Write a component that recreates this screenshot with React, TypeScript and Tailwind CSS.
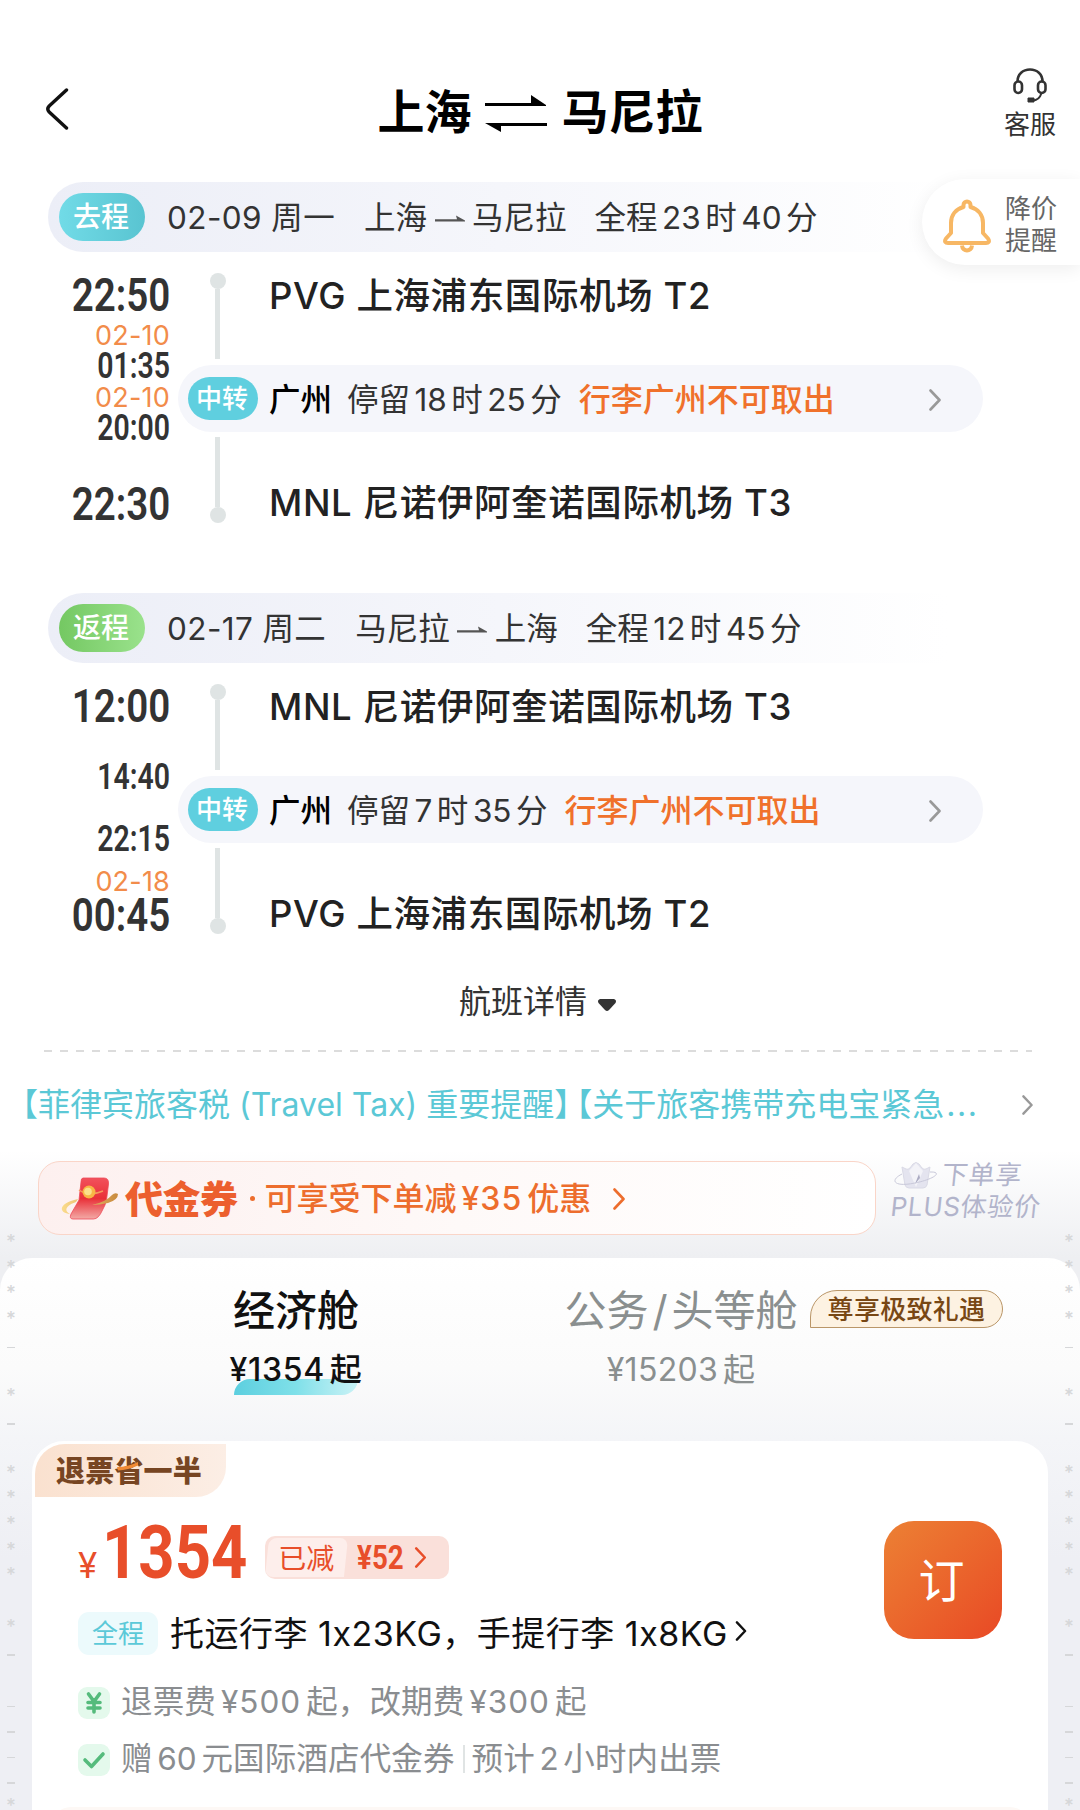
import { Fragment } from "react";
import type { ReactNode } from "react";

interface TimeItem { text: string; kind: "big" | "small" | "date"; gap: string }

interface Leg {
  tag: string; tagClass: string; date: string; from: string; to: string; total: string;
  fromAirport: string; toAirport: string; stay: string; times: TimeItem[];
}

const LEGS: Leg[] = [
  {
    tag: "去程", tagClass: "from-[#71dbe7] to-[#59c4d1]",
    date: "02-09 周一", from: "上海", to: "马尼拉", total: "全程23时40分",
    fromAirport: "PVG 上海浦东国际机场 T2", toAirport: "MNL 尼诺伊阿奎诺国际机场 T3",
    stay: "停留18时25分",
    times: [
      { text: "22:50", kind: "big",   gap: "mt-[25px]" },
      { text: "02-10", kind: "date",  gap: "mt-[14px]" },
      { text: "01:35", kind: "small", gap: "mt-[7px]" },
      { text: "02-10", kind: "date",  gap: "mt-[9px]" },
      { text: "20:00", kind: "small", gap: "mt-[7px]" },
      { text: "22:30", kind: "big",   gap: "mt-[46px]" },
    ],
  },
  {
    tag: "返程", tagClass: "from-[#74c862] to-[#9ae28c]",
    date: "02-17 周二", from: "马尼拉", to: "上海", total: "全程12时45分",
    fromAirport: "MNL 尼诺伊阿奎诺国际机场 T3", toAirport: "PVG 上海浦东国际机场 T2",
    stay: "停留7时35分",
    times: [
      { text: "12:00", kind: "big",   gap: "mt-[25px]" },
      { text: "14:40", kind: "small", gap: "mt-[41px]" },
      { text: "22:15", kind: "small", gap: "mt-[36px]" },
      { text: "02-18", kind: "date",  gap: "mt-[20px]" },
      { text: "00:45", kind: "big",   gap: "mt-[6px]" },
    ],
  },
];

const WATERMARK = "****- *- ***** *- ----*".split("");

// Adds a little air between Chinese characters and the numbers beside them
function Mixed({ text }: { text: string }) {
  return (
    <>
      {text.split(/(¥?\d+)/).map((part, i) =>
        i % 2 ? (
          <span key={i} className={part.startsWith("¥") ? "mx-[5px] tracking-[1px]" : "mx-[4.5px]"}>{part}</span>
        ) : (
          <Fragment key={i}>{part}</Fragment>
        )
      )}
    </>
  );
}

function Chevron({ className }: { className: string }) {
  return (
    <svg viewBox="0 0 12 22" fill="none" stroke="currentColor" strokeWidth="2.6" strokeLinecap="round" strokeLinejoin="round" className={className}>
      <path d="M1.5 1.5 10.5 11 1.5 20.5" />
    </svg>
  );
}

function Time({ text, kind, gap }: TimeItem) {
  if (kind === "date") {
    return <div className={`flex h-5 items-center text-[27px] leading-none tracking-[0.2px] text-[#f28c4a] ${gap}`}>{text}</div>;
  }
  return (
    <div
      className={`flex origin-right items-center font-[Roboto] leading-none text-[#333] ${gap} ${
        kind === "big" ? "h-[34px] scale-x-[0.82] text-[47px] font-semibold" : "h-[27px] scale-x-[0.79] pt-px text-[36px] font-semibold -mb-px"
      }`}
    >
      {text}
    </div>
  );
}

function LegBlock({ leg }: { leg: Leg }) {
  return (
    <section>
      <div className="ml-12 flex h-[70px] w-[900px] items-center rounded-l-full bg-gradient-to-r from-[#eceef7] via-[#f5f6fb] to-white pl-[11px] text-[31.5px] leading-none text-[#333]">
        <span className={`mr-[22px] flex h-12 w-[86px] items-center justify-center rounded-full bg-gradient-to-r pr-0.5 text-[28px] font-medium text-white ${leg.tagClass}`}>
          {leg.tag}
        </span>
        <span className="mt-px tracking-[0.4px]">{leg.date}</span>
        <span className="ml-[29px] mt-px">{leg.from}</span>
        <svg viewBox="0 0 30 8" className="mx-[7.5px] mt-1 h-2 w-[30px] shrink-0">
          <path d="M0 4.2h22L21 .6 30 5.6v.8H0z" fill="#555" />
        </svg>
        <span className="mt-px">{leg.to}</span>
        <span className="ml-[28px] mt-px"><Mixed text={leg.total} /></span>
      </div>

      <div className="flex">
        <div className="flex w-[178px] flex-col items-end pr-2">
          {leg.times.map((t, i) => <Time key={i} {...t} />)}
        </div>

        <div className="flex-1">
          <div className="flex h-[113px]">
            <div className="ml-[31.5px] flex w-4 flex-col items-center pt-[21px]">
              <div className="h-4 w-4 rounded-full bg-[#dfe4e4]" />
              <div className="h-[70px] w-[5px] bg-[#dfe4e4]" />
            </div>
            <div className="ml-[43.5px] flex h-[88px] items-center text-[36.5px] font-medium leading-none tracking-[0.6px] text-[#222]">{leg.fromAirport}</div>
          </div>

          <div className="flex h-[67px] w-[805px] items-center rounded-full bg-[#f5f6fb] pl-2.5 pr-[42px] text-[31.5px] leading-none">
            <span className="mr-[11px] flex h-[43px] w-[70px] items-center justify-center rounded-full bg-[#5fcfdf] pr-0.5 text-[26px] font-medium text-white">中转</span>
            <span className="mt-0.5 font-medium text-black">广州</span>
            <span className="ml-[15px] mt-0.5 text-[#333]"><Mixed text={leg.stay} /></span>
            <span className="ml-[17px] mt-0.5 text-[32px] font-medium text-[#f0712b]">行李广州不可取出</span>
            <Chevron className="ml-auto mt-0.5 h-[22px] w-3 text-[#999]" />
          </div>

          <div className="flex h-[91px]">
            <div className="ml-[31.5px] flex w-4 flex-col items-center pt-[5px]">
              <div className="h-[70px] w-[5px] bg-[#dfe4e4]" />
              <div className="h-4 w-4 rounded-full bg-[#dfe4e4]" />
            </div>
            <div className="ml-[43.5px] mt-[27px] flex h-[88px] items-center self-start text-[36.5px] font-medium leading-none tracking-[0.6px] text-[#222]">{leg.toAirport}</div>
          </div>
        </div>
      </div>
    </section>
  );
}

function Header() {
  return (
    <header className="flex h-[182px] items-start justify-between pl-[46px] pr-6">
      <svg viewBox="0 0 24 42" fill="none" stroke="#111" strokeWidth="3.4" strokeLinecap="round" strokeLinejoin="round" className="mt-[88px] h-[42px] w-6">
        <path d="M20.5 2 3.2 18q-2.8 3 0 6L20.5 40" />
      </svg>
      <h1 className="ml-[6px] mt-[88px] flex items-center text-[47px] font-bold leading-none text-black">
        上海
        <svg viewBox="0 0 62 38" className="mx-[14px] mt-0.5 h-[38px] w-[62px]">
          <path d="M0 9H46V1L61 11V12H0zM62 29V32H16V38L0 29z" />
        </svg>
        马尼拉
      </h1>
      <div className="mt-[67px] flex flex-col items-center text-[26px] leading-none text-[#333]">
        <svg viewBox="0 0 36 38" fill="none" stroke="#333" strokeWidth="2.6" className="h-[38px] w-9">
          <path d="M5.500 14.500C5.500 7 11 2.500 18 2.500S30.500 7 30.500 14.500" />
          <rect x="2.500" y="14.500" width="7.500" height="11.500" rx="3.700" />
          <rect x="26" y="14.500" width="7.500" height="11.500" rx="3.700" />
          <path d="M29.500 26c-1.500 5-4.500 7.500-9 7.500" strokeWidth="2" />
          <path d="M16 31h6v4h-6z" fill="#333" strokeWidth="1" />
        </svg>
        <span className="mt-[7px]">客服</span>
      </div>
    </header>
  );
}

function PriceAlert() {
  return (
    <div className="absolute right-0 top-[179px] flex h-[86px] w-[158px] items-center rounded-l-full bg-white pl-[21px] text-[#666] shadow-[0_4px_18px_rgba(0,0,0,0.07)]">
      <svg viewBox="0 0 48 54" fill="none" stroke="#f7b764" strokeWidth="4" strokeLinejoin="round" className="mt-[7px] h-[54px] w-12">
        <path d="M20.500 8V6a3.500 3.500 0 0 1 7 0v2C35 10 40 16 40 24v10l5 5.500c2 3 .5 4.500-2 4.500H5c-2.500 0-4-1.500-2-4.500L8 34V24C8 16 13 10 20.500 8z" />
        <path d="M19 46.500c.5 6.500 9.500 6.500 10 0" />
      </svg>
      <div className="ml-[14px] mt-[6px] text-[26px] leading-8">
        <div>降价</div>
        <div>提醒</div>
      </div>
    </div>
  );
}

function CouponBar() {
  return (
    <div className="mt-6 flex h-[74px] items-start pl-[38px]">
      <div className="flex h-[74px] w-[838px] items-center rounded-[22px] border-[1.5px] border-[#fad5c8] bg-gradient-to-r from-[#fdf0ef] via-[#fef9f8] to-white pl-[22px] pt-px leading-none">
        <svg viewBox="0 0 58 44" className="h-11 w-[58px]">
          <defs>
            <linearGradient id="packet" x1="0" y1="0" x2="0" y2="1">
              <stop offset="0" stopColor="#f2515c" />
              <stop offset=".5" stopColor="#e93038" />
              <stop offset="1" stopColor="#f3aaa6" />
            </linearGradient>
            <linearGradient id="ribbon" x1="0" y1="0" x2="1" y2="0">
              <stop offset="0" stopColor="#fbdc8c" />
              <stop offset="1" stopColor="#c98a3d" />
            </linearGradient>
          </defs>
          <path d="M22 1h21q5 0 4.500 6l-2 16q-1 5-4 10-4 9-9 9H12q-4 0-2-5l8-14 2-18q0-4 2-4z" fill="url(#packet)" stroke="#ee4a58" strokeWidth=".8" />
          <path d="M18 13q10 7 24 1" stroke="#f39a5b" strokeWidth="1.500" fill="none" />
          <path d="M17 22C-3 26-3 36 9 37 3 34 4 29 15 25zM31 28q14-3 20-10 3-3 6-1 0 6-10 9-8 2-16 2z" fill="url(#ribbon)" />
          <circle cx="28" cy="15" r="6.500" fill="#f8b545" />
          <circle cx="27" cy="14.500" r="3.800" fill="#fbe08a" />
        </svg>
        <span className="ml-1.5 text-[38px] font-black tracking-[-0.5px] text-[#ec5f2e]">代金券</span>
        <span className="ml-[12px] mr-[10px] h-[5px] w-[5px] rounded-full bg-[#ed6d2d]" />
        <span className="text-[32px] font-medium text-[#ed6d2d]"><Mixed text="可享受下单减¥35优惠" /></span>
        <Chevron className="ml-[21px] h-[22px] w-3.5 text-[#ed6d2d]" />
      </div>
      <div className="ml-4 mt-1 -skew-x-6 text-[26px] leading-8 tracking-[0.7px] text-[#b2b4cb]">
        <div className="-mt-1.5 flex items-center">
          <svg viewBox="0 0 44 30" fill="none" className="mr-1 h-[30px] w-11 skew-x-6">
            <path d="m8 7 4 2q2 1 4-1l3-4q3-3 6 0l3 4q2 2 4 1l4-2-3 18q-1 3-4 3H15q-3 0-4-3z" fill="#e4e4ef" stroke="#dadae6" />
            <path d="m15 11 7 16 7-16-7-8z" fill="#f3f3f8" />
            <path d="m21 24 4-10 1 4z" fill="#aaaac2" />
            <path d="M8 14C-4 20 0 26 15 24c15-2 30-8 27-11-1-1-3-1-6-1" stroke="#c9c9da" />
          </svg>
          下单享
        </div>
        <div>PLUS体验价</div>
      </div>
    </div>
  );
}

function CabinTabs() {
  return (
    <div className="flex h-[183px] pt-7 leading-none">
      <div className="ml-[228px] flex w-[136px] flex-col items-center text-[#111]">
        <div className="flex h-[50px] items-center whitespace-nowrap text-[42px] font-medium">经济舱</div>
        <div className="relative mt-[16px] flex h-9 items-center whitespace-nowrap text-[32px] font-medium">
          <span className="absolute left-[5px] top-[27px] h-4 w-[124px] rounded-br-2xl rounded-tl-2xl bg-gradient-to-r from-[#5ccfdf] via-[#7fe0e9] to-[#c9f2f6]" />
          <span className="relative tracking-[0.7px]"><Price text="¥1354" /></span>
        </div>
      </div>
      <div className="ml-[200px] flex w-[234px] flex-col items-center text-[#8a8f8f]">
        <div className="flex h-[50px] items-center whitespace-nowrap text-[42px]">公务<span className="mx-1">/</span>头等舱</div>
        <div className="mt-[16px] flex h-9 items-center whitespace-nowrap text-[32px] tracking-[0.3px]"><Price text="¥15203" /></div>
      </div>
      <div className="ml-3 mt-1 flex h-[38px] w-[193px] items-center justify-center rounded-r-[19px] rounded-tl-[27px] border-[1.5px] border-[#ba9668] bg-[#fdf2e2] text-[26px] font-medium text-[#784714]">
        <span className="mt-px tracking-[0.3px]">尊享极致礼遇</span>
      </div>
    </div>
  );
}

function Price({ text }: { text: string }) {
  return <>{text}<span className="ml-[5px]">起</span></>;
}

function InfoRow({ icon, children }: { icon: ReactNode; children: ReactNode }) {
  return (
    <div className="flex h-8 items-center whitespace-nowrap text-[31.5px] leading-none tracking-[0.15px] text-[#8a8d90]">
      <svg viewBox="0 0 32 32" fill="none" stroke="#55bb7c" strokeWidth="3.600" strokeLinecap="round" strokeLinejoin="round" className="mr-[11px] mt-px h-8 w-8 rounded-[9px] bg-[#e4f9ec]">
        {icon}
      </svg>
      {children}
    </div>
  );
}

function FareCard() {
  return (
    <div className="mx-8 flex h-[369px] flex-col overflow-hidden rounded-t-[32px] bg-white pl-[3px] pt-[3px] leading-none">
      <div className="relative flex h-[53px] w-[191px] shrink-0 items-center rounded-br-[30px] rounded-tl-[30px] bg-gradient-to-r from-[#fae1cf] to-[#fceee5] pl-[21px] pt-0.5 text-[29px] font-black tracking-[0.2px] text-[#774522]">
        退票省一半
        <svg viewBox="0 0 24 9" className="absolute left-[81px] top-[18px] h-[9px] w-6">
          <path d="M1 5Q12 5 22 0v3.500Q12 8 2 8.500z" fill="#f08a35" />
        </svg>
      </div>
      <div className="flex justify-between pl-[43px] pr-[46px]">
        <div>
          <div className="mt-[26px] flex h-[58px] items-end">
            <span className="mb-[-2px] text-[35px] text-[#e84e2a]">¥</span>
            <span className="ml-[5px] w-[146px] origin-left translate-y-px scale-x-[0.845] font-[Roboto] text-[75px] font-bold leading-[60px] text-[#e84e2a]">1354</span>
            <div className="mb-0.5 ml-[17px] flex h-[43px] w-[184px] items-stretch overflow-hidden rounded-[10px] bg-[#fae0da] p-0.5 text-[#e84e2a]">
              <div className="relative flex w-20 items-center pl-[11px] text-[28px]">
                <span className="absolute inset-y-0 left-0 w-[79px] -skew-x-6 rounded-l-lg rounded-tr-lg bg-[#fdeeeb]" />
                <span className="relative mt-0.5">已减</span>
              </div>
              <span className="flex w-[54px] origin-left scale-x-[0.84] items-center pl-3 font-[Roboto] text-[33px] font-bold">¥52</span>
              <Chevron className="ml-[13px] mt-[9px] h-[21px] w-[13px]" />
            </div>
          </div>
          <div className="mt-[31px] flex h-[43px] items-center whitespace-nowrap text-[34px] text-[#111]">
            <span className="mr-3 flex h-[43px] w-20 items-center justify-center rounded-[11px] bg-[#ecfafc] text-[26px] text-[#5bc9d8]">全程</span>
            <span className="tracking-[0.5px]">托运行李 1x23KG，手提行李 1x8KG</span>
            <Chevron className="-mt-1.5 ml-[7px] h-5 w-3" />
          </div>
        </div>
        <button className="mt-[24px] flex h-[118px] w-[118px] items-center justify-center rounded-[30px] bg-gradient-to-br from-[#ec8034] to-[#e84825] pr-[3px] text-[46px] text-white">
          订
        </button>
      </div>
      <div className="mt-[31px] flex flex-col gap-[25px] pl-[43px]">
        <InfoRow icon={<path d="M10.500 7 16 14.500 21.500 7M16 14.500V25M10 15.500h12M10 21h12" />}>
          <span><Mixed text="退票费¥500起，改期费¥300起" /></span>
        </InfoRow>
        <InfoRow icon={<path d="m7 16 6.500 6.500L25 10" />}>
          <span><Mixed text="赠60元国际酒店代金券" /></span>
          <span className="ml-2 mr-[7px] h-7 w-[2px] bg-[#e0e4e4]" />
          <span><Mixed text="预计2小时内出票" /></span>
        </InfoRow>
      </div>
      <div className="ml-4 mr-[18px] mt-[32px] h-10 shrink-0 rounded-t-[20px] bg-[#fdf8f5]" />
    </div>
  );
}

function Watermark({ side }: { side: string }) {
  return (
    <div className={`pointer-events-none absolute top-[1230px] flex w-3 flex-col items-center text-[#d6d7d9] ${side}`}>
      {WATERMARK.map((c, i) => (
        <div key={i} className="flex h-[25.65px] justify-center">
          {c === "*" && <span className="mt-[6px] text-[19px] font-medium leading-[12px]">*</span>}
          {c === "-" && <span className="mt-[14px] h-[1.5px] w-[8px] bg-current" />}
        </div>
      ))}
    </div>
  );
}

export default function App() {
  return (
    <main className="relative h-[1810px] w-[1080px] overflow-hidden bg-white font-[Inter,'Noto_Sans_CJK_SC',sans-serif]">
      <div className="flex h-full flex-col bg-[linear-gradient(to_bottom,#fff_1150px,#eeeff2_1258px,#eeeff4_1810px)]">
        <Header />
        <LegBlock leg={LEGS[0]} />
        <div className="h-[70px] shrink-0" />
        <LegBlock leg={LEGS[1]} />

        <div className="mt-[50px] flex h-9 shrink-0 items-center pl-[459px] text-[32px] leading-none text-[#333]">
          航班详情
          <svg viewBox="0 0 20 14" className="ml-[10px] mt-1.5 h-3.5 w-5">
            <path d="M3 1h14q3 1 1.500 4L12 12q-2 2-4 0L1.500 5Q0 2 3 1z" fill="#333" />
          </svg>
        </div>
        <div className="ml-11 mr-12 mt-[30px] h-[2px] shrink-0 bg-[repeating-linear-gradient(to_right,#dcdcdc_0_8px,transparent_8px_16.1px)]" />

        <div className="mt-[33px] flex h-10 shrink-0 items-center pl-[6px] pr-[47px] text-[32px] leading-none text-[#5bc8d6]">
          <span className="whitespace-nowrap">
            【菲律宾旅客税 (Travel Tax) 重要提醒】<span className="ml-[-10px]">【关于旅客携带充电宝紧急</span>
            <span className="ml-0.5 tracking-[1.5px]">...</span>
          </span>
          <Chevron className="ml-auto h-5 w-[11px] text-[#999]" />
        </div>

        <div className="shrink-0 pt-3"><CouponBar /></div>

        <div className="mt-[23px] flex-1 rounded-t-[32px] bg-[linear-gradient(to_bottom,#fff,#fbfbfb_110px,#f4f5f8_180px,#eeeff4_300px)]">
          <CabinTabs />
          <FareCard />
        </div>
      </div>
      <PriceAlert />
      <Watermark side="left-[5px]" />
      <Watermark side="right-[5px]" />
    </main>
  );
}
